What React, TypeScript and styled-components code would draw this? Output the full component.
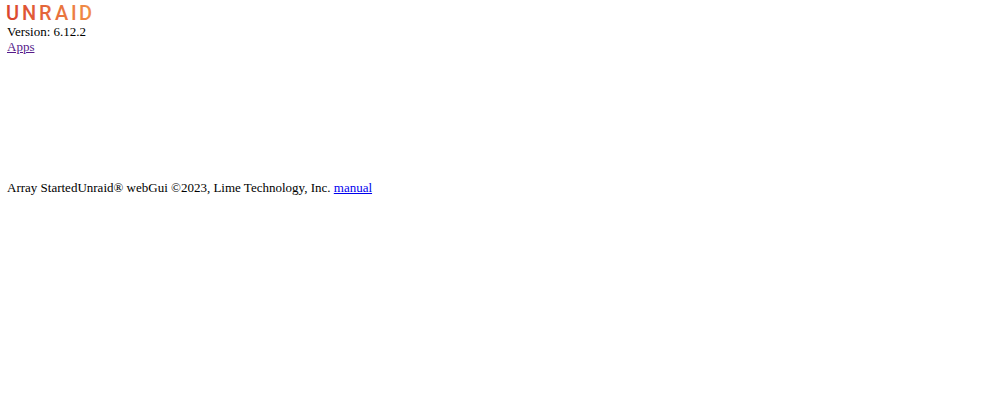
import React from "react";
import styled, { createGlobalStyle } from "styled-components";

const GlobalStyle = createGlobalStyle`
  body {
    margin: 0;
    background: #fff;
    color: #000;
    font-family: "Liberation Serif", "Times New Roman", serif;
    font-size: 13px;
    line-height: 15px;
  }
`;

const Page = styled.div`
  display: flex;
  flex-direction: column;
  gap: 126px;
  padding: 5px 7px;
`;

const Header = styled.header`
  display: flex;
  flex-direction: column;
  align-items: flex-start;
`;

const LogoLink = styled.a`
  display: block;
  height: 19px;
`;

const Wordmark = styled.svg`
  display: block;
  width: 87px;
  height: 19px;
  overflow: visible;
  font-family: Roboto, sans-serif;
  font-size: 20px;
  font-weight: 500;
`;

const Version = styled.div``;

const Link = styled.a<{ $visited?: boolean }>`
  color: ${(p) => (p.$visited ? "#551a8b" : "#0000ee")};
  text-decoration: underline;
`;

const Footer = styled.footer``;

export default function App() {
  return (
    <>
      <GlobalStyle />
      <Page>
        <Header>
          <LogoLink href="#home" aria-label="Unraid">
            <Wordmark viewBox="0 0 87 19">
              <defs>
                <linearGradient id="brand" gradientUnits="userSpaceOnUse" x1="0" y1="16" x2="86" y2="0">
                  <stop offset="0" stopColor="#d9432f" />
                  <stop offset="1" stopColor="#f29148" />
                </linearGradient>
              </defs>
              <text x="-1 15 32 48 64 72" y="15" fill="url(#brand)">
                UNRAID
              </text>
            </Wordmark>
          </LogoLink>
          <Version>Version: 6.12.2</Version>
          <nav>
            <Link href="#apps" $visited>
              Apps
            </Link>
          </nav>
        </Header>
        <Footer>
          <span>Array Started</span>
          <span>Unraid® webGui ©2023, Lime Technology, Inc. </span>
          <Link href="#manual">manual</Link>
        </Footer>
      </Page>
    </>
  );
}
